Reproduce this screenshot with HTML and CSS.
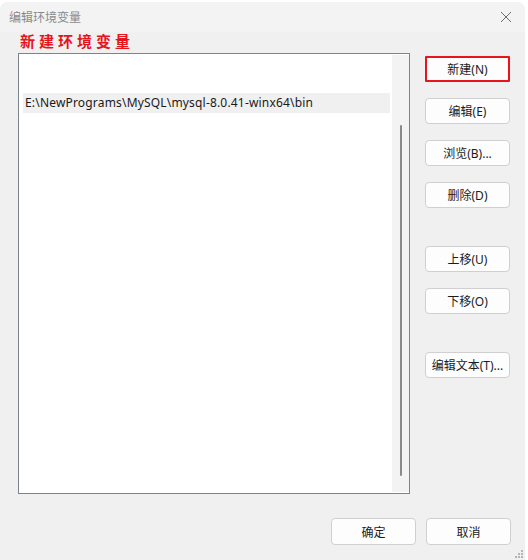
FILE: index.html
```html
<!DOCTYPE html>
<html lang="zh-CN">
<head>
<meta charset="utf-8">
<title>编辑环境变量</title>
<link rel="stylesheet" href="styles.css">
</head>
<body>
<div class="dialog">
  <div class="titlebar">
    <span class="title">编辑环境变量</span>
    <span class="close">
      <svg width="12" height="12" viewBox="0 0 12 12"><path d="M1 1 L11 11 M11 1 L1 11" stroke="#6b6b6b" stroke-width="1" fill="none"/></svg>
    </span>
  </div>
  <div class="main">
    <div class="left">
      <div class="note">新建环境变量</div>
      <div class="list">
        <div class="rows">
          <div class="row selected">E:\NewPrograms\MySQL\mysql-8.0.41-winx64\bin</div>
        </div>
        <div class="scrollbar"><div class="thumb"></div></div>
      </div>
    </div>
    <div class="right">
      <button class="btn btn-new">新建(N)</button>
      <button class="btn">编辑(E)</button>
      <button class="btn">浏览(B)...</button>
      <button class="btn">删除(D)</button>
      <div class="spacer"></div>
      <button class="btn">上移(U)</button>
      <button class="btn">下移(O)</button>
      <div class="spacer"></div>
      <button class="btn">编辑文本(T)...</button>
    </div>
  </div>
  <div class="footer">
    <button class="btn btn-foot">确定</button>
    <button class="btn btn-foot">取消</button>
  </div>
  <svg class="grip" width="10" height="10" viewBox="0 0 10 10">
    <rect x="7" y="1" width="2" height="2" fill="#b5b5b5"/>
    <rect x="4" y="4" width="2" height="2" fill="#b5b5b5"/>
    <rect x="7" y="4" width="2" height="2" fill="#b5b5b5"/>
    <rect x="1" y="7" width="2" height="2" fill="#b5b5b5"/>
    <rect x="4" y="7" width="2" height="2" fill="#b5b5b5"/>
    <rect x="7" y="7" width="2" height="2" fill="#b5b5b5"/>
  </svg>
</div>
</body>
</html>
```

FILE: styles.css
```css
html, body {
  margin: 0;
  padding: 0;
  background: #ffffff;
}

body {
  font-family: "Noto Sans", "Noto Sans CJK SC", sans-serif;
  font-size: 12px;
  color: #1b1b1b;
}

.dialog {
  position: relative;
  margin-top: 2px;
  width: 525px;
  height: 558px;
  background: #f0f0f0;
  border-radius: 8px 8px 0 0;
  overflow: hidden;
}

.titlebar {
  height: 30px;
  background: #f3f3f3;
  display: flex;
  align-items: center;
  justify-content: space-between;
  padding: 0 10px 0 9px;
}

.title {
  color: #8a8a8a;
  font-family: "Noto Sans CJK SC", sans-serif;
  font-size: 12px;
  line-height: 14px;
}

.close {
  display: flex;
  align-items: center;
  width: 12px;
  height: 12px;
  margin-right: 3px;
}

.main {
  display: flex;
  padding-left: 18px;
}

.left {
  width: 392px;
}

.note {
  height: 21px;
  line-height: 17px;
  padding-left: 2px;
  color: #e8141c;
  font-family: "Noto Sans CJK SC", sans-serif;
  font-weight: 700;
  font-size: 15px;
  letter-spacing: 4px;
}

.list {
  box-sizing: border-box;
  height: 441px;
  background: #ffffff;
  border: 1px solid #7d838a;
  display: flex;
}

.rows {
  flex: 1;
  padding-top: 39px;
}

.row {
  margin-left: 4px;
  width: 365px;
  height: 20px;
  line-height: 20px;
  padding-left: 2px;
  white-space: nowrap;
  color: #1a1a1a;
  letter-spacing: 0.18px;
}

.row.selected {
  background: #f0f0f0;
}

.scrollbar {
  width: 17px;
  margin: 1px 0;
  background: #f3f3f3;
  padding-top: 70px;
  box-sizing: border-box;
}

.thumb {
  width: 2px;
  height: 351px;
  margin-left: 8px;
  background: #8a8a8a;
  border-radius: 1px;
}

.right {
  margin-left: 15px;
  padding-top: 24px;
  display: flex;
  flex-direction: column;
  gap: 16px;
}

.spacer {
  height: 6px;
}

.btn {
  box-sizing: border-box;
  width: 85px;
  height: 26px;
  background: #fdfdfd;
  border: 1px solid #d0d0d0;
  border-radius: 4px;
  font-family: "Noto Sans", "Noto Sans CJK SC", sans-serif;
  font-size: 12px;
  color: #1b1b1b;
  padding: 0;
  display: flex;
  align-items: center;
  justify-content: center;
  white-space: nowrap;
}

.btn-new {
  border: 2px solid #e8141c;
  border-radius: 1px;
}

.footer {
  display: flex;
  justify-content: flex-end;
  gap: 10px;
  margin-top: 24px;
  padding-right: 14px;
}

.btn-foot {
  width: 85px;
  height: 27px;
}

.grip {
  position: absolute;
  right: 1px;
  bottom: 1px;
}
```
